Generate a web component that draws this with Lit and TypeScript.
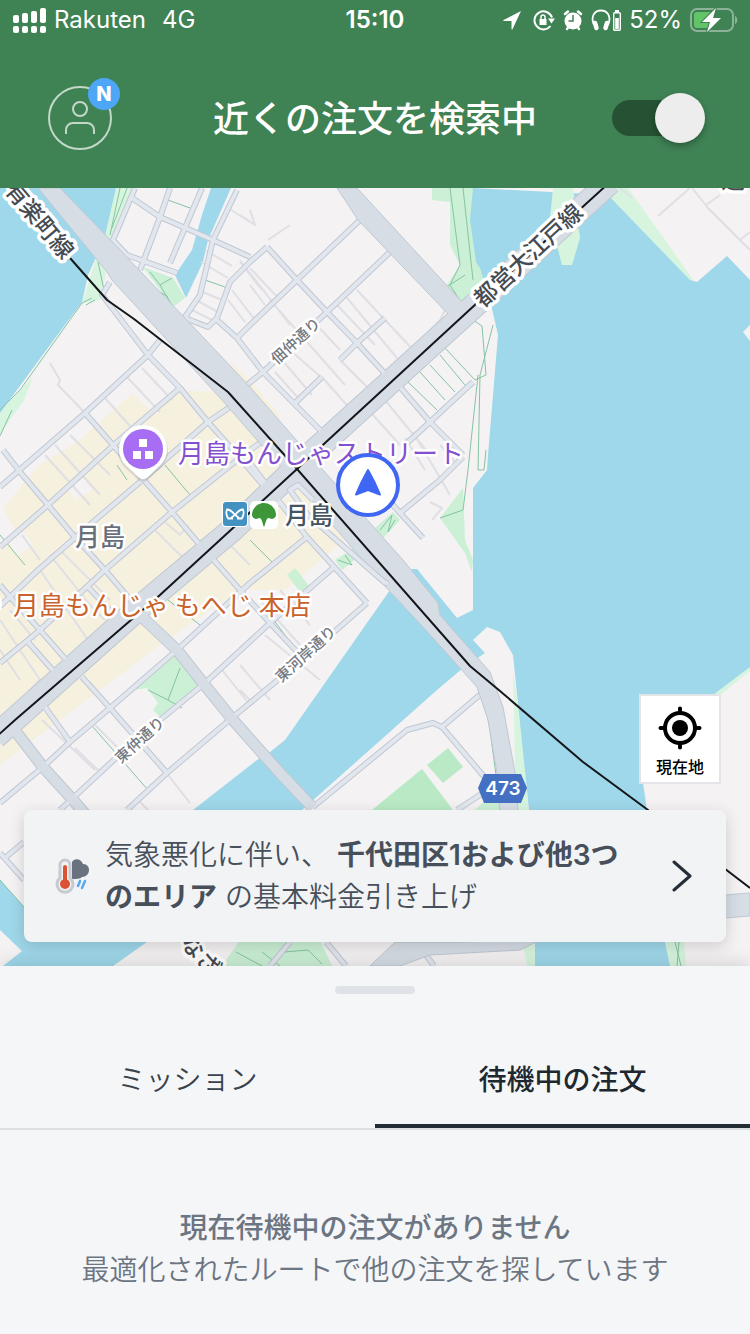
import { LitElement, html, svg, css } from "lit";
import { customElement, state } from "lit/decorators.js";

type Area = { cls: string; pts: string };

const AREAS: Area[] = [
  { cls: "shop", pts: "133,393 150,410 178,390 207,392 222,388 235,402 295,470 0,730 0,545 15,530 3,508 37,467 80,440" },
  { cls: "shop", pts: "230,362 250,380 281,417 270,422 244,398" },
  { cls: "shop", pts: "300,487 345,540 285,590 240,590 160,645 0,765 0,735" },
  { cls: "land", pts: "8,540 22,530 33,545 17,556" },
  { cls: "land", pts: "66,488 84,478 92,490 76,500" },
  { cls: "bank", pts: "116,188 134,188 112,245 100,300 82,303 95,262" },
  { cls: "bank", pts: "33,377 24,400 0,434 0,412" },
  { cls: "bank", pts: "608,195 614,188 628,188 694,281 690,280" },
  { cls: "park", pts: "143,267 173,278 185,298 173,307" },
  { cls: "park", pts: "432,188 474,188 472,220 476,262 490,268 494,300 463,306 445,288 460,265 450,245 450,202 432,200" },
  { cls: "park", pts: "463,488 440,518 465,553 472,572 473,560 465,540" },
  { cls: "park", pts: "375,528 393,512 400,520 383,538" },
  { cls: "park", pts: "335,560 356,547 358,557 342,570" },
  { cls: "park", pts: "287,575 295,568 310,587 300,592" },
  { cls: "park", pts: "175,655 200,685 160,717 153,710 158,703 147,688 135,690" },
  { cls: "field", pts: "448,748 463,767 443,783 427,765" },
  { cls: "field", pts: "422,769 453,810 372,810" },
  { cls: "park", pts: "488,797 517,797 517,815 470,815" },
  { cls: "bank", pts: "513,670 522,733 529,815 516,815" },
  { cls: "park", pts: "240,940 320,940 332,966 222,966" },
  { cls: "bank", pts: "505,940 535,940 535,966 527,966 524,950" },
  { cls: "bank", pts: "665,940 684,940 686,966 670,966" },
  { cls: "bank", pts: "713,695 750,667 750,671 720,695" },
];

const WATER: string[] = [
  "0,188 116,188 104,240 88,275 82,302 50,345 0,413",
  "211,188 231,188 208,240 203,262 186,298 175,275 192,250 202,215",
  "473,188 608,195 690,280 697,282 727,256 750,280 750,667 713,695 650,742 643,783 647,810 665,942 670,966 535,966 535,942 529,810 513,655 500,632 487,627 473,640 485,653 463,668 437,690 302,810 147,942 113,966 3,966 22,951 0,930 0,880 24,907 60,920 193,810 257,760 270,752 285,740 390,590 412,569 417,569 457,618 473,610 473,488 487,470 488,455 498,335 490,300 480,268 476,262 470,220",
];

const STREETS: string[] = [
  "M135,188L113,240L127,255L177,273",
  "M132,198L160,217L213,240L250,257",
  "M170,188L160,217L140,270",
  "M202,188L170,263",
  "M237,190L213,240L200,295L185,317",
  "M185,318L208,327L217,318L230,282L250,262L267,247",
  "M217,320L237,338L263,372L325,435",
  "M237,338L250,325L297,280L360,220",
  "M267,247L297,280L327,312L357,343L388,377",
  "M390,252L327,312L263,372L247,385",
  "M385,318L357,343L340,360",
  "M322,377L295,403",
  "M400,387L430,422L463,455",
  "M473,382L430,422L407,443",
  "M110,282L102,295L148,355L180,388L208,422L233,450L280,505",
  "M160,340L148,355L85,413L0,487",
  "M180,388L117,442L48,505L0,547",
  "M230,407L208,422L140,482L93,522L38,570L10,597L0,606",
  "M85,413L113,445L172,512L200,545",
  "M3,450L20,472L48,505L73,535L105,570L133,603",
  "M270,436L250,450L172,512L105,570L40,630L0,663",
  "M0,585L10,597L40,630L68,662",
  "M88,587L117,618",
  "M28,642L57,675",
  "M212,558L240,590L270,623L300,655",
  "M82,677L110,708L167,773",
  "M307,537L250,583L177,650L110,708L70,742L43,767L0,803",
  "M333,568L270,623L205,683L160,720L117,757L60,810",
  "M367,603L302,660L233,717L167,773L127,810",
  "M250,463L278,500L307,537L367,603",
  "M40,700L70,742",
  "M463,457L440,480L400,513L423,538",
  "M400,513L380,490",
  "M482,693L442,727L433,723L407,730L313,807",
  "M442,727L487,780",
  "M457,810L483,793",
  "M0,853L24,880",
  "M24,842L6,857",
  "M270,966L290,942",
  "M326,942L346,966",
  "M426,955L434,966",
];

const LANES: string[] = [
  "M50,363L60,380L58,385L85,413",
  "M126,376L160,412M142,368L172,400M105,398L138,435M70,435L110,475M55,445L100,495M45,455L90,505",
  "M205,250L232,266M201,262L228,278M198,290L222,300M196,300L218,312M192,310L212,320M208,240L246,256",
  "M228,208L250,222M240,262L262,290M232,290L255,320M228,300L245,322",
  "M240,260L290,325M250,268L280,300M250,285L265,305M270,300L345,385",
  "M357,290L415,352M347,298L397,358M337,305L375,345M415,352L412,360M312,320L340,350M340,360L368,388L395,372M445,310L440,320L400,362",
  "M290,350L322,378M282,360L312,395M322,377L360,420M300,400L275,372",
  "M385,400L430,455M373,415L400,445M413,432L450,495M405,438L425,470M440,445L455,462",
  "M430,502L442,508L432,520",
  "M155,530L185,560M165,522L180,535L188,525M230,545L250,565M60,550L110,600M50,555L90,605L105,620M40,570L88,640",
  "M0,620L40,680L30,690M10,610L35,640M80,540L95,560M0,650L20,680M22,535L40,560",
  "M280,590L310,625M260,600L300,645M240,665L270,700M222,670L250,705M265,635L320,680",
  "M42,720L95,770M75,748L100,772M95,725L120,750M168,775L190,803M140,802L150,812M240,690L250,700",
  "M268,240L290,225M240,215L255,225L250,210M690,188L658,216",
  "M706,205L720,195M692,188L708,208L750,250M740,240L750,232M620,188L632,198",
];

const PATHS: string[] = [
  "M120,188L110,235M127,188L112,228M98,262L104,290M92,298L82,303L20,390L0,410M0,436L12,410M86,305L95,300",
  "M150,272L160,285L173,307M160,285L172,278M157,290L168,297M168,200L190,208M205,280L225,287",
  "M450,188L460,265M463,188L473,280M460,265L450,285L463,305M445,288L465,275",
  "M473,320L482,326L486,375L475,380L445,348M430,365L455,392M420,372L445,400M408,382L437,410M440,355L465,385M493,325L480,375L478,470L484,470L486,450M478,375L468,470L463,510L440,518",
  "M400,387L475,320M165,465L190,495M127,480L117,465M200,625L168,600M148,690L168,700L180,668M168,700L182,708M270,615L296,650",
  "M0,535L25,565M250,540L275,565M345,555L352,565L338,560M380,530L392,515L388,532L395,520",
  "M93,727L148,790M484,697L490,730L496,775M0,880L24,907M236,952L262,966M262,952L280,966M284,952L308,950L322,964M675,942L681,966M679,942L677,966",
];

const HIGHWAYS: string[] = [
  "M38,188L60,188L120,250L184,317L250,387L305,450L323,470L403,560L438,603L440,615L490,672L503,707L517,783L518,815L500,815L497,773L488,720L477,687L432,637L422,626L383,584L300,487L270,455L222,400L112,280L107,272Z",
  "M337,188L357,188L463,303L472,302L455,322L450,316L358,220Z",
  "M370,966L395,942L460,942L540,940L520,950L430,955L400,966Z",
  "M700,897L750,893L750,916L700,920Z",
];

@customElement("map-canvas")
export class MapCanvas extends LitElement {
  static styles = css`
    :host { display: block; width: 100%; height: 100%; }
    svg { display: block; width: 100%; height: 100%; }
    .land { fill: #f4f2f3; }
    .shop { fill: #f6f0de; }
    .park { fill: #cbf0d5; }
    .bank { fill: #d7f5de; }
    .field { fill: #b9eac5; }
    .water { fill: #9fd8ea; }
    .lane, .path, .case, .street, .avenue-case, .avenue, .trunk-case, .trunk, .rail { fill: none; stroke-linejoin: round; }
    .lane { stroke: #dfdfe4; stroke-width: 2; }
    .path { stroke: #86c3a4; stroke-width: 1; }
    .case { stroke: #c0c8d5; stroke-width: 6; }
    .street { stroke: #e2e6ed; stroke-width: 4; }
    .avenue-case { stroke: #bfc8d2; stroke-width: 12; }
    .avenue { stroke: #d6dde5; stroke-width: 10; }
    .trunk-case { stroke: #bfc8d2; stroke-width: 25; }
    .trunk { stroke: #d6dde5; stroke-width: 23; }
    .highway { fill: #d6dde5; stroke: #bfc8d2; stroke-width: 1; }
    .rail { stroke: #14171a; stroke-width: 2; }
    text {
      font-family: "Noto Sans CJK JP", sans-serif;
      paint-order: stroke;
      stroke: #fff;
      stroke-width: 5px;
      stroke-linejoin: round;
      dominant-baseline: central;
    }
    .line { font-size: 23px; fill: #454b52; font-weight: 500; text-anchor: middle; stroke-width: 7px; }
    .road { font-size: 15px; fill: #75797f; font-weight: 500; text-anchor: middle; }
    .sight { font-size: 26px; fill: #8450cf; }
    .food { font-size: 26px; fill: #c9622b; }
    .town { font-size: 25px; fill: #68707a; font-weight: 500; }
    .station { font-size: 24px; fill: #465362; font-weight: 500; }
    .shield { font-family: Inter, sans-serif; font-size: 19px; font-weight: 600; fill: #fff; stroke: none; text-anchor: middle; }
  `;

  private line(cls: string, d: string) {
    return svg`<path class=${cls} d=${d}></path>`;
  }

  render() {
    const oedo = "M610,182L475,305L323,443L297,467L232,530L140,607L-5,737";
    const avenues = ["M143,618L177,650L203,683L233,720L280,773L313,808", "M13,728L43,767L73,800L85,814"];
    return html`
      <svg viewBox="0 188 750 778" preserveAspectRatio="xMidYMid slice" role="img" aria-label="月島周辺の地図">
        <rect class="land" x="-400" y="-400" width="1600" height="2000"></rect>
        ${AREAS.filter((a) => a.cls !== "land").map((a) => svg`<polygon class=${a.cls} points=${a.pts}></polygon>`)}
        ${AREAS.filter((a) => a.cls === "land").map((a) => svg`<polygon class=${a.cls} points=${a.pts}></polygon>`)}
        ${WATER.map((p) => svg`<polygon class="water" points=${p}></polygon>`)}
        <polygon class="bank" points="553,188 573,188 580,238 572,265 562,265 550,218"></polygon>
        <polygon class="land" points="743,332 750,325 750,341"></polygon>
        ${LANES.map((d) => this.line("lane", d))}
        ${PATHS.map((d) => this.line("path", d))}
        ${STREETS.map((d) => this.line("case", d))}
        ${avenues.map((d) => this.line("avenue-case", d))}
        ${this.line("trunk-case", oedo)}
        ${STREETS.map((d) => this.line("street", d))}
        ${HIGHWAYS.map((d) => this.line("highway", d))}
        ${this.line("trunk", oedo)}
        ${avenues.map((d) => this.line("avenue", d))}
        <path class="case" d="M313,500L298,485L290,490L308,515L384,582L388,584"></path>
        <path class="street" d="M313,500L298,485L290,490L308,515L384,582L388,584"></path>
        ${this.line("rail", "M70,258L107,300L134,319L228,392L297,469L470,666L500,691L583,762L648,810L750,888")}
        ${this.line("rail", "M610,182L477,303L325,443L297,469L233,528L160,595L15,720L-5,738")}

        <text class="line" transform="translate(41 219) rotate(50)">有楽町線</text>
        <text class="line" transform="translate(527 254) rotate(-43)">都営大江戸線</text>
        <text class="line" transform="translate(202 954) rotate(48)">なざ</text>
        <text class="line" x="733" y="178">通</text>
        <text class="road" transform="translate(295 340) rotate(-42)">佃仲通り</text>
        <text class="road" transform="translate(305 653) rotate(-42)">東河岸通り</text>
        <text class="road" transform="translate(139 739) rotate(-42)">東仲通り</text>
        <text class="town" x="75" y="535">月島</text>
        <text class="sight" x="178" y="451">月島もんじゃストリート</text>
        <text class="food" x="13" y="603">月島もんじゃ もへじ 本店</text>
        <text class="station" x="285" y="513">月島</text>
        <circle cx="-14" cy="604" r="16" fill="#fff"></circle>

        <path fill="#8a8a8a" opacity=".25" d="M118 451a25 25 0 0 1 50 0c0 12-8 18-15 24-5 5-7 7-10 7s-5-2-10-7c-7-6-15-12-15-24z"></path>
        <path fill="#fff" d="M119 449a24 24 0 0 1 48 0c0 12-8 17-14 23-5 5-7 7-10 7s-5-2-10-7c-6-6-14-11-14-23z"></path>
        <circle cx="143" cy="449" r="20" fill="#a76df2"></circle>
        <path fill="#fff" d="M139 439h8v8h-8zM133 451h8v8h-8zM145 451h8v8h-8z"></path>

        <rect x="222" y="501" width="26" height="26" rx="4" fill="#fff"></rect>
        <rect x="223" y="502" width="24" height="24" rx="3" fill="#4391c1"></rect>
        <path fill="none" stroke="#fff" stroke-width="1.800" d="M228.500 519c-2-3-2.500-7-1.500-9.500 4 0 6 3 8 5.500 2-2.500 4-5.500 8-5.500 1 2.500.5 6.500-1.500 9.500M231 519c0-2 2.500-3 4-4 1.500 1 4 2 4 4M228 518.500h5M237 518.500h5"></path>
        <rect x="250" y="501" width="28" height="28" rx="5" fill="#fff"></rect>
        <path fill="#3d9637" d="M264 526.500c-1 0-1-4-3-7.500-.8-1.200-2-1.500-3.200-.6-2.300 1.400-5.800-.4-5.800-3.400 0-6 5-12 12-12s12 6 12 12c0 3-3.500 4.800-5.800 3.400-1.200-.9-2.400-.6-3.200.6-2 3.500-2 7.500-3 7.500z"></path>

        <circle cx="368" cy="485" r="30" fill="#fff" stroke="#4067f3" stroke-width="4"></circle>
        <path fill="#4067f3" stroke="#4067f3" stroke-width="2" stroke-linejoin="round" d="M368 470C372 477 377 487 380 494.500L368 490L356 494.500C359 487 364 477 368 470Z"></path>

        <path fill="#4470c4" d="M484 774h37l6 14-6 15h-37l-6-15z"></path>
        <text class="shield" x="503" y="788">473</text>
      </svg>
    `;
  }
}

@customElement("status-bar")
export class StatusBar extends LitElement {
  static styles = css`
    :host {
      display: grid;
      grid-template-columns: 1fr auto 1fr;
      align-items: center;
      height: 40px;
      padding: 0 12px;
      color: #fff;
      font: 400 24px/40px Inter, sans-serif;
    }
    .group { display: flex; align-items: center; gap: 8px; }
    .network { margin-left: 8px; }
    .end { justify-content: flex-end; }
    .time { font-weight: 600; }
    .phones { display: flex; gap: 2px; }
    svg { display: block; flex: none; }
  `;

  render() {
    return html`
      <div class="group">
        <svg width="34" height="26" viewBox="0 0 34 26" fill="#fff" aria-hidden="true">
          <rect x="1" y="8" width="6" height="8" rx="2"></rect><rect x="1" y="19" width="6" height="7" rx="2"></rect>
          <rect x="10" y="6" width="6" height="10" rx="2"></rect><rect x="10" y="19" width="6" height="7" rx="2"></rect>
          <rect x="19" y="4" width="6" height="12" rx="2"></rect><rect x="19" y="19" width="6" height="7" rx="2"></rect>
          <rect x="28" y="1" width="6" height="15" rx="2"></rect><rect x="28" y="19" width="6" height="7" rx="2"></rect>
        </svg>
        <span>Rakuten</span>
        <span class="network">4G</span>
      </div>
      <span class="time">15:10</span>
      <div class="group end">
        <svg width="22" height="20" viewBox="0 0 22 20" fill="#fff" aria-hidden="true">
          <path d="M18 1L.5 10c-.5.4-.3 1 .3 1H8.500v8c0 .6.6.7 1 .2z"></path>
        </svg>
        <svg width="22" height="22" viewBox="0 0 22 22" fill="none" aria-hidden="true">
          <path stroke="#fff" stroke-width="2" d="M19 8.500A9 9 0 1 0 17.500 17"></path>
          <path fill="#fff" d="M15 9.500h7l-3.500 5zM6.500 10h7v6h-7z"></path>
          <path stroke="#fff" stroke-width="1.500" d="M8 10V8a2 2 0 0 1 4 0v2"></path>
        </svg>
        <svg width="20" height="22" viewBox="0 0 20 22" aria-hidden="true">
          <circle cx="10" cy="12" r="8.500" fill="#fff"></circle>
          <path stroke="#fff" stroke-width="2.500" stroke-linecap="round" d="M2 5L5 2.500M18 5L15 2.500M4 20L5.500 18M16 20L14.500 18"></path>
          <path fill="none" stroke="#3f8254" stroke-width="1.500" d="M10 6v6H5.500"></path>
        </svg>
        <div class="phones">
          <svg width="20" height="22" viewBox="0 0 20 22" fill="none" aria-hidden="true">
            <path stroke="#fff" stroke-width="1.800" d="M3 16C-1 7 4 1.500 10 1.500s11 5.500 7 14.500"></path>
            <path stroke="#fff" stroke-width="4.500" stroke-linecap="round" d="M4 14l1.500 5M16 14l-1.500 5"></path>
          </svg>
          <svg width="8" height="22" viewBox="0 0 8 22" aria-hidden="true">
            <rect x=".7" y="3.700" width="6.600" height="17.500" rx="1" fill="none" stroke="#fff" stroke-width="1.400"></rect>
            <path fill="#fff" d="M2 1h4v2H2zM2.200 9h3.600v11H2.200z"></path>
          </svg>
        </div>
        <span>52%</span>
        <svg width="48" height="24" viewBox="0 0 48 24" aria-hidden="true">
          <rect x="1" y="1" width="42" height="22" rx="6" fill="none" stroke="#8cb398" stroke-width="2"></rect>
          <rect x="4" y="4" width="19" height="16" rx="3" fill="#62c466"></rect>
          <path fill="#8cb398" d="M45 8c3 1 3 7 0 8z"></path>
          <path fill="#fff" stroke="#3f8254" stroke-width="2" paint-order="stroke" d="M26 0L12 14h8l-3 10L31 10h-8z"></path>
        </svg>
      </div>
    `;
  }
}

@customElement("app-root")
export class AppRoot extends LitElement {
  @state() private online = true;
  @state() private tab = 1;

  static styles = css`
    :host {
      display: flex;
      flex-direction: column;
      min-height: 100vh;
      background: #f5f6f8;
      color: #20282f;
      font-family: Inter, "Noto Sans CJK JP", sans-serif;
    }
    * { box-sizing: border-box; }
    button { font: inherit; color: inherit; border: 0; background: none; padding: 0; margin: 0; cursor: pointer; }
    svg { display: block; flex: none; }
    header { background: #3f8254; color: #fff; }
    .bar {
      display: grid;
      grid-template-columns: 1fr auto 1fr;
      align-items: center;
      height: 148px;
      padding: 8px 44px 0;
    }
    .avatar { position: relative; width: 64px; height: 64px; margin-left: 4px; }
    .badge {
      position: absolute;
      top: -8px;
      right: -8px;
      width: 32px;
      height: 32px;
      border-radius: 50%;
      background: #4da6f6;
      color: #fff;
      font: 800 20px/32px Inter, sans-serif;
      text-align: center;
    }
    h1 { margin: 0; padding-bottom: 4px; font: 500 36px/52px "Noto Sans CJK JP", sans-serif; }
    .switch {
      appearance: none;
      position: relative;
      justify-self: end;
      width: 94px;
      height: 50px;
      margin: 0;
      cursor: pointer;
    }
    .switch::before {
      content: "";
      position: absolute;
      inset: 7px 8px 7px 0;
      border-radius: 18px;
      background: #265233;
    }
    .switch::after {
      content: "";
      position: absolute;
      top: 0;
      left: 0;
      width: 50px;
      height: 50px;
      border-radius: 50%;
      background: #ededed;
      box-shadow: 0 3px 6px rgba(0, 0, 0, 0.3);
    }
    .switch:checked::after { left: auto; right: 1px; }
    .map { position: relative; flex: 1; min-height: 480px; display: flex; flex-direction: column; justify-content: flex-end; }
    map-canvas { position: absolute; inset: 0; overflow: hidden; }
    .over { position: relative; display: flex; flex-direction: column; gap: 26px; padding: 24px; }
    .locate {
      align-self: flex-end;
      display: flex;
      flex-direction: column;
      align-items: center;
      gap: 4px;
      width: 82px;
      margin-right: 5px;
      padding: 10px 0 4px;
      background: #fff;
      border: 2px solid #e3e5e8;
      font: 500 16px/24px "Noto Sans CJK JP", sans-serif;
      color: #000;
    }
    .notice {
      display: flex;
      align-items: center;
      gap: 16px;
      width: 100%;
      padding: 24px 34px 24px 31px;
      border-radius: 8px;
      background: #f1f3f5;
      box-shadow: 0 4px 16px rgba(0, 0, 0, 0.16);
      color: #474f5a;
      font: 350 28px/42px Inter, "Noto Sans CJK JP", sans-serif;
      text-align: left;
    }
    .message { flex: 1; }
    .message b { font-weight: 600; }
    .chevron { margin-left: 16px; }
    .sheet { position: relative; background: #f5f6f8; box-shadow: 0 -4px 16px rgba(0, 0, 0, 0.12); }
    .handle { display: block; width: 80px; height: 8px; margin: 0 auto 40px; border-radius: 4px; background: #dfe2e6; }
    .grip { padding-top: 20px; }
    .tabs { display: grid; grid-template-columns: 1fr 1fr; border-bottom: 2px solid #dcdfe2; }
    .tab {
      padding: 23px 0 25px;
      border-bottom: 4px solid transparent;
      font: 350 28px/42px "Noto Sans CJK JP", sans-serif;
      color: #3a424c;
    }
    .tab.on { font-weight: 500; color: #20282f; border-bottom-color: #222c33; }
    .empty { padding: 75px 24px 45px; text-align: center; color: #6c7581; font: 350 28px/42px "Noto Sans CJK JP", sans-serif; }
    .empty h2 { margin: 0; font: inherit; font-weight: 500; }
    .empty p { margin: 0; }
  `;

  render() {
    const tabs = ["ミッション", "待機中の注文"];
    return html`
      <header>
        <status-bar></status-bar>
        <div class="bar">
          <button class="avatar" aria-label="アカウント">
            <svg width="64" height="64" viewBox="0 0 64 64" fill="none" stroke="#c3d8c9" stroke-width="2" aria-hidden="true">
              <circle cx="32" cy="32" r="31"></circle>
              <circle cx="32" cy="23" r="7"></circle>
              <path d="M18 48v-4a7 7 0 0 1 7-7h14a7 7 0 0 1 7 7v4"></path>
            </svg>
            <span class="badge">N</span>
          </button>
          <h1>近くの注文を検索中</h1>
          <input
            class="switch"
            type="checkbox"
            role="switch"
            aria-label="オンライン"
            .checked=${this.online}
            @change=${(e: Event) => (this.online = (e.target as HTMLInputElement).checked)}
          />
        </div>
      </header>

      <section class="map">
        <map-canvas></map-canvas>
        <div class="over">
          <button class="locate">
            <svg width="44" height="44" viewBox="0 0 44 44" aria-hidden="true">
              <circle cx="22" cy="22" r="15" fill="none" stroke="#000" stroke-width="4"></circle>
              <circle cx="22" cy="22" r="8" fill="#000"></circle>
              <path stroke="#000" stroke-width="4" stroke-linecap="round" d="M22 2.500V7M22 37v4.500M2.500 22H7M37 22h4.500"></path>
            </svg>
            現在地
          </button>
          <button class="notice">
            <svg width="34" height="36" viewBox="0 0 34 36" aria-hidden="true">
              <path fill="#69727e" d="M17 21V4c2-4 9-4 11 2 4 0 6 3 6 6 0 4-3 7-7 7-2 2-5 2-10 2z"></path>
              <path stroke="#5aa9ef" stroke-width="2.500" stroke-linecap="round" d="M25 23l-2 5M30 23l-3 7"></path>
              <path fill="#f1f3f5" stroke="#c6cad1" stroke-width="3" d="M5 20V7a5 5 0 0 1 10 0v13a8 8 0 1 1-10 0z"></path>
              <path stroke="#dc5334" stroke-width="4" stroke-linecap="round" d="M10 9v16"></path>
              <circle cx="10" cy="26" r="5" fill="#dc5334"></circle>
            </svg>
            <span class="message">気象悪化に伴い、 <b>千代田区1および他3つのエリア</b> の基本料金引き上げ</span>
            <svg class="chevron" width="20" height="36" viewBox="0 0 20 36" fill="none" aria-hidden="true">
              <path stroke="#252d36" stroke-width="3" stroke-linecap="round" stroke-linejoin="round" d="M2 4l16 14L2 32"></path>
            </svg>
          </button>
        </div>
      </section>

      <section class="sheet">
        <div class="grip"><button class="handle" aria-label="シートを開く"></button></div>
        <div class="tabs" role="tablist">
          ${tabs.map(
            (t, i) => html`<button
              class="tab ${i === this.tab ? "on" : ""}"
              role="tab"
              aria-selected=${i === this.tab}
              @click=${() => (this.tab = i)}
            >${t}</button>`
          )}
        </div>
        <div class="empty">
          <h2>現在待機中の注文がありません</h2>
          <p>最適化されたルートで他の注文を探しています</p>
        </div>
      </section>
    `;
  }
}
